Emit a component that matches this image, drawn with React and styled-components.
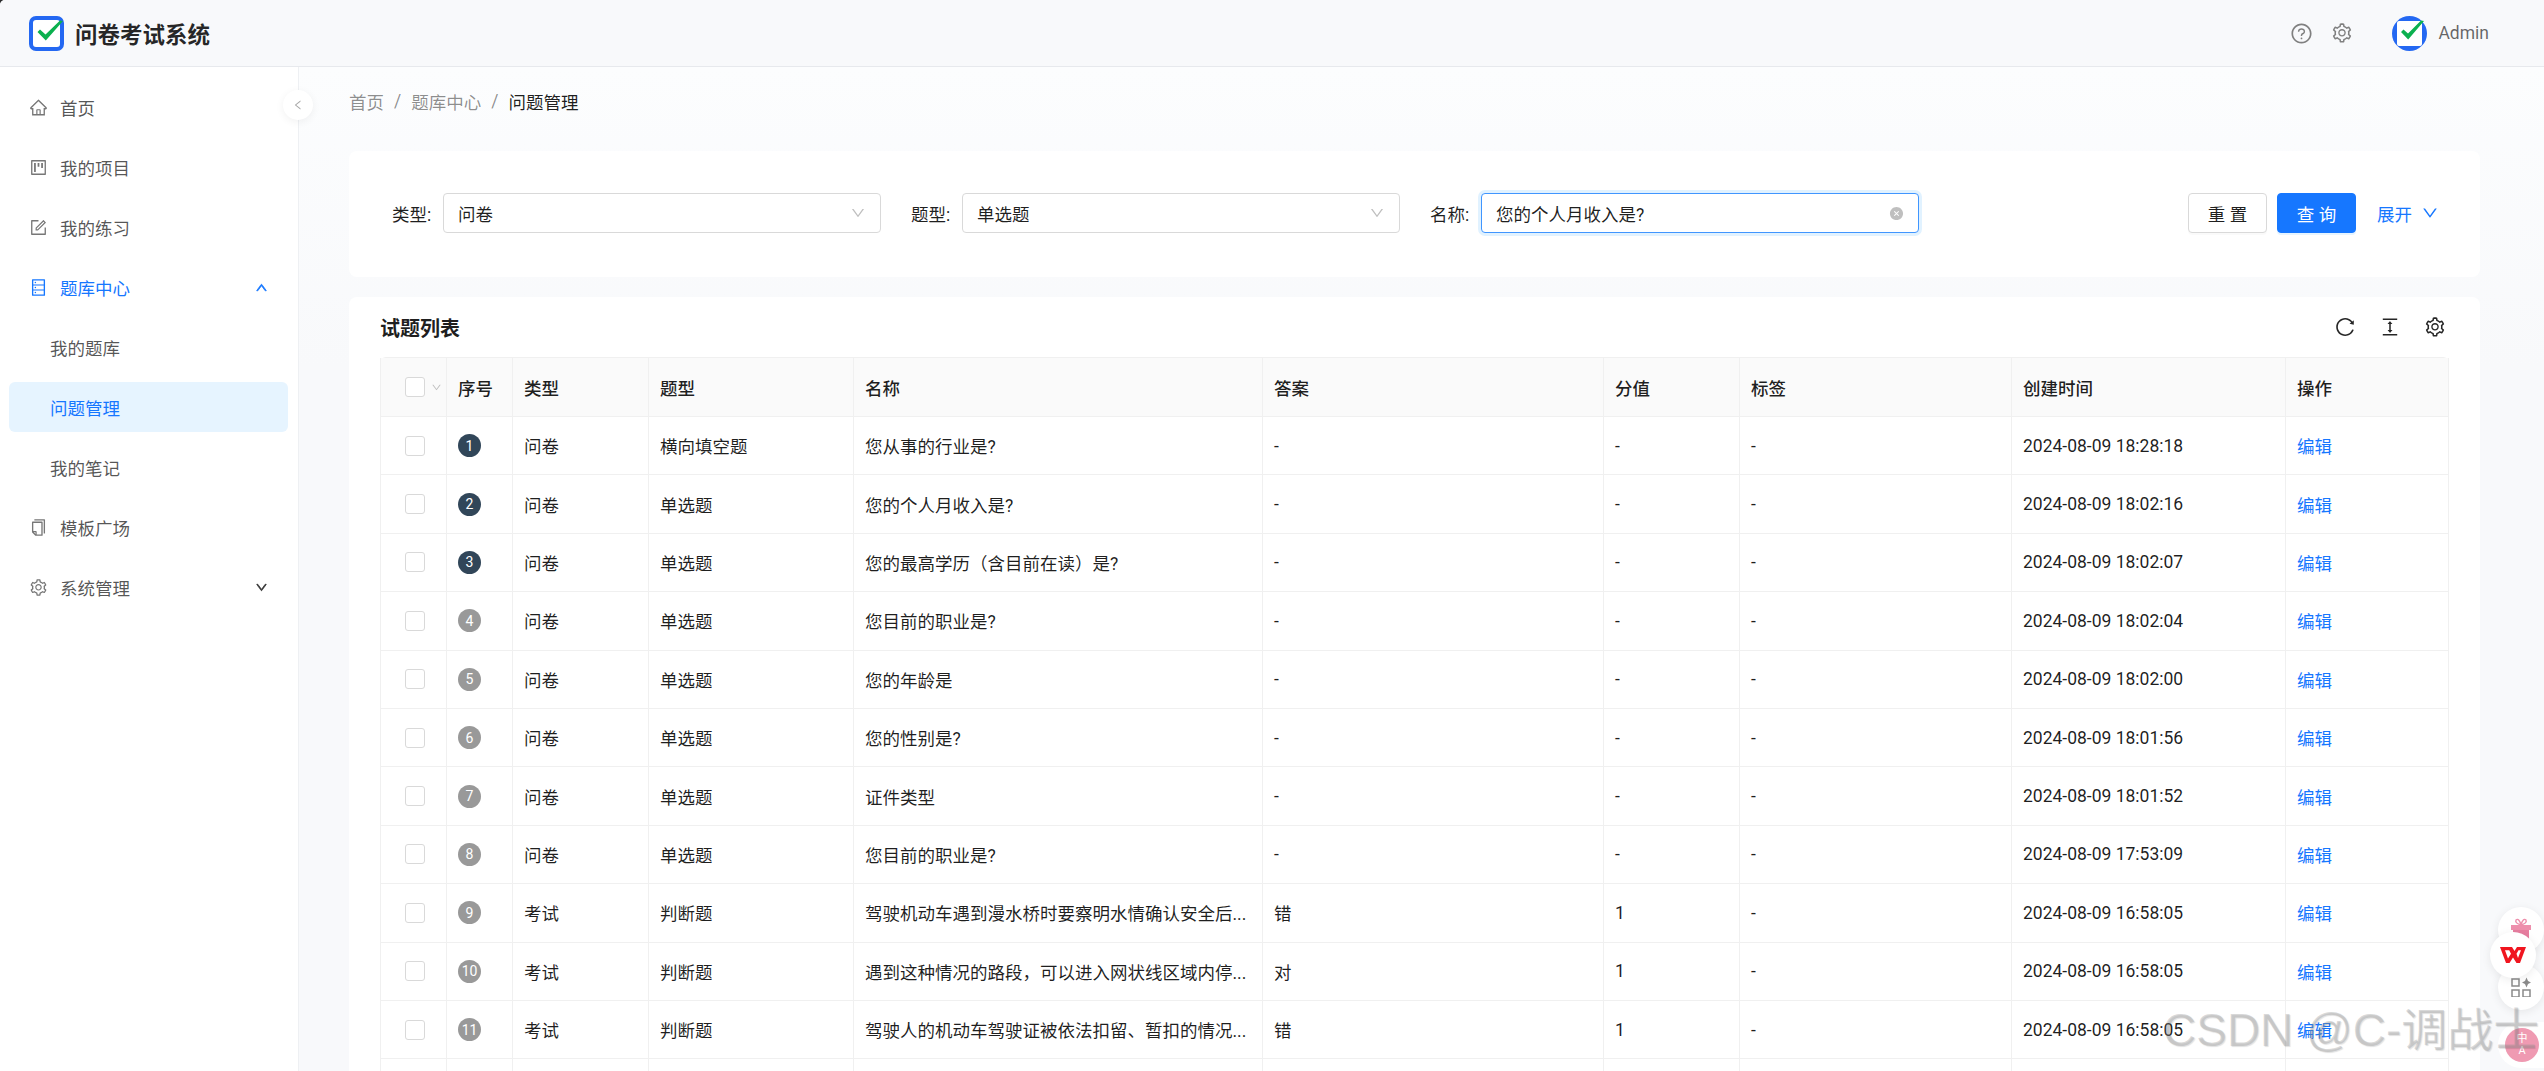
import React from "react"
import styled, { createGlobalStyle } from "styled-components"
import {
  AiOutlineHome,
  AiOutlineProject,
  AiOutlineForm,
  AiOutlineDatabase,
  AiOutlineCopy,
  AiOutlineSetting,
  AiOutlineUp,
  AiOutlineDown,
  AiOutlineLeft,
  AiOutlineQuestionCircle,
  AiOutlineReload,
  AiOutlineColumnHeight,
  AiFillCloseCircle,
} from "react-icons/ai"

const GlobalStyle = createGlobalStyle`
  html, body {
    margin: 0;
    height: 100%;
    overflow: hidden;
    background: #2b2b2b;
  }
  * {
    box-sizing: border-box;
  }
  body {
    font-family: Roboto, "Noto Sans CJK SC", sans-serif;
    font-size: 17.5px;
    color: rgba(0, 0, 0, 0.88);
  }
`

const COLUMNS = "67px 66px 136px 205px 409px 341px 136px 272px 274px 163px"

const MENU = [
  { label: "首页", icon: AiOutlineHome },
  { label: "我的项目", icon: AiOutlineProject },
  { label: "我的练习", icon: AiOutlineForm },
  { label: "题库中心", icon: AiOutlineDatabase, open: true },
  { label: "我的题库", sub: true },
  { label: "问题管理", sub: true, active: true },
  { label: "我的笔记", sub: true },
  { label: "模板广场", icon: AiOutlineCopy },
  { label: "系统管理", icon: AiOutlineSetting, closed: true },
]

const ROWS = [
  ["问卷", "横向填空题", "您从事的行业是?", "-", "-", "2024-08-09 18:28:18"],
  ["问卷", "单选题", "您的个人月收入是?", "-", "-", "2024-08-09 18:02:16"],
  ["问卷", "单选题", "您的最高学历（含目前在读）是?", "-", "-", "2024-08-09 18:02:07"],
  ["问卷", "单选题", "您目前的职业是?", "-", "-", "2024-08-09 18:02:04"],
  ["问卷", "单选题", "您的年龄是", "-", "-", "2024-08-09 18:02:00"],
  ["问卷", "单选题", "您的性别是?", "-", "-", "2024-08-09 18:01:56"],
  ["问卷", "单选题", "证件类型", "-", "-", "2024-08-09 18:01:52"],
  ["问卷", "单选题", "您目前的职业是?", "-", "-", "2024-08-09 17:53:09"],
  ["考试", "判断题", "驾驶机动车遇到漫水桥时要察明水情确认安全后...", "错", "1", "2024-08-09 16:58:05"],
  ["考试", "判断题", "遇到这种情况的路段，可以进入网状线区域内停...", "对", "1", "2024-08-09 16:58:05"],
  ["考试", "判断题", "驾驶人的机动车驾驶证被依法扣留、暂扣的情况...", "错", "1", "2024-08-09 16:58:05"],
]

const HEADERS = ["序号", "类型", "题型", "名称", "答案", "分值", "标签", "创建时间", "操作"]

const Logo = ({ size = 35 }) => (
  <svg width={size} height={size} viewBox="0 0 35 35">
    <rect x="2" y="2" width="31" height="31" rx="5" fill="#fff" stroke="#2468f2" strokeWidth="4" />
    <path d="M8.5 16 L11 13.6 L16.5 18.6 L31 4.5 L34 5 L16.8 24.5 Z" fill="#0bb04f" />
  </svg>
)

const AvatarLogo = () => (
  <svg width="35" height="35" viewBox="0 0 35 35">
    <circle cx="17.5" cy="17.5" r="17.5" fill="#2468f2" />
    <rect x="5" y="5" width="25" height="25" rx="2" fill="#fff" />
    <path d="M9 16 L11.5 13.6 L16 17.6 L29 4.5 L32 5 L16.2 23.5 Z" fill="#0bb04f" />
  </svg>
)

const Select = ({ value }) => (
  <SelectBox>
    <span>{value}</span>
    <AiOutlineDown size={16} color="#bfbfbf" />
  </SelectBox>
)

export default function App() {
  return (
    <Page>
      <GlobalStyle />
      <Header>
        <Brand>
          <Logo />
          <BrandName>问卷考试系统</BrandName>
        </Brand>
        <HeaderTools>
          <AiOutlineQuestionCircle size={23} />
          <AiOutlineSetting size={22} />
          <User>
            <AvatarLogo />
            <UserName>Admin</UserName>
          </User>
        </HeaderTools>
      </Header>
      <Body>
        <Sidebar>
          <CollapseButton>
            <AiOutlineLeft size={12} />
          </CollapseButton>
          {MENU.map(item => (
            <MenuItem key={item.label} $sub={item.sub} $active={item.active} $open={item.open}>
              {item.icon && <item.icon size={19} />}
              <span>{item.label}</span>
              {item.open && <MenuArrow><AiOutlineUp size={13} strokeWidth={60} /></MenuArrow>}
              {item.closed && <MenuArrow><AiOutlineDown size={13} strokeWidth={60} /></MenuArrow>}
            </MenuItem>
          ))}
        </Sidebar>
        <Main>
          <Breadcrumb>
            <Crumb>首页</Crumb>
            <Slash>/</Slash>
            <Crumb>题库中心</Crumb>
            <Slash>/</Slash>
            <Crumb $current>问题管理</Crumb>
          </Breadcrumb>
          <SearchCard>
            <Field>
              <FieldLabel>类型:</FieldLabel>
              <Select value="问卷" />
            </Field>
            <Field>
              <FieldLabel>题型:</FieldLabel>
              <Select value="单选题" />
            </Field>
            <Field>
              <FieldLabel>名称:</FieldLabel>
              <InputBox>
                <span>您的个人月收入是?</span>
                <AiFillCloseCircle size={15} color="#bfbfbf" />
              </InputBox>
            </Field>
            <SearchActions>
              <Button>重 置</Button>
              <Button $primary>查 询</Button>
              <ExpandLink>
                展开
                <AiOutlineDown size={18} />
              </ExpandLink>
            </SearchActions>
          </SearchCard>
          <TableCard>
            <TableTop>
              <TableTitle>试题列表</TableTitle>
              <TableTools>
                <AiOutlineReload size={22} />
                <AiOutlineColumnHeight size={22} />
                <AiOutlineSetting size={22} />
              </TableTools>
            </TableTop>
            <Table>
              <HeadRow>
                <CheckCell>
                  <Checkbox />
                  <HeadCaret>
                    <AiOutlineDown size={11} />
                  </HeadCaret>
                </CheckCell>
                {HEADERS.map(title => (
                  <Cell key={title}>{title}</Cell>
                ))}
              </HeadRow>
              {ROWS.map((row, i) => (
                <DataRow key={i}>
                  <CheckCell>
                    <Checkbox />
                  </CheckCell>
                  <Cell>
                    <IndexBadge $top={i < 3}>{i + 1}</IndexBadge>
                  </Cell>
                  <Cell>{row[0]}</Cell>
                  <Cell>{row[1]}</Cell>
                  <Cell>{row[2]}</Cell>
                  <Cell>{row[3]}</Cell>
                  <Cell>{row[4]}</Cell>
                  <Cell>-</Cell>
                  <Cell>{row[5]}</Cell>
                  <Cell>
                    <EditLink>编辑</EditLink>
                  </Cell>
                </DataRow>
              ))}
              <DataRow>
                <CheckCell />
                {HEADERS.map(title => (
                  <Cell key={title} />
                ))}
              </DataRow>
            </Table>
          </TableCard>
        </Main>
      </Body>

      <FloatButton $top={907} $right={0}>
        <svg width="22" height="24" viewBox="0 0 22 24">
          <path d="M1 7h20v5H1z" fill="#ee8fac" />
          <path d="M3 12h16v12H3z" fill="#e77ea0" />
          <path d="M11 7C7 6 5 4 6 2c2-2 4 1 5 5 1-4 3-7 5-5 1 2-1 4-5 5z" fill="none" stroke="#ee8fac" strokeWidth="1.4" />
        </svg>
      </FloatButton>
      <FloatButton $top={964} $right={0}>
        <svg width="20" height="20" viewBox="0 0 20 20" fill="none" stroke="#8a8a8a" strokeWidth="1.5">
          <rect x="1" y="2" width="7" height="7" />
          <rect x="1" y="13" width="7" height="7" />
          <rect x="12" y="13" width="7" height="7" />
          <path d="M15.5 0.5 L17 4 L20 5.5 L17 7 L15.5 10.5 L14 7 L11 5.5 L14 4 Z" fill="#8a8a8a" stroke="none" />
        </svg>
      </FloatButton>
      <FloatButton $top={932} $right={8}>
        <svg width="26" height="18" viewBox="0 0 26 18">
          <path d="M0 1 H12 L14.5 5 L17 1 H26 L20 17 H16.5 L13 11.5 L9.5 17 H6 Z M5 4.2 L8 12.5 L11 7.8 L9.2 4.2 Z M18.5 4.2 L16.5 7.8 L18 12 L21 4.2 Z" fill="#f0151f" fillRule="evenodd" />
        </svg>
      </FloatButton>
      <TranslateTab>
        <TranslateDot>
          <span>中</span>
          <span>A</span>
        </TranslateDot>
      </TranslateTab>
      <Watermark>CSDN @C-调战士</Watermark>
    </Page>
  )
}

const Page = styled.div`
  position: relative;
  width: 100vw;
  height: 100vh;
  overflow: hidden;
  display: flex;
  flex-direction: column;
  background: #f8f9fb;
  border-top-left-radius: 5px;
`

const Header = styled.header`
  flex: none;
  height: 67px;
  display: flex;
  align-items: center;
  justify-content: space-between;
  padding: 0 55px 0 29px;
  background: #f8f9fb;
  border-bottom: 1px solid #e7e9ed;
`

const Brand = styled.div`
  display: flex;
  align-items: center;
  gap: 11px;
`

const BrandName = styled.span`
  font-size: 22.5px;
  font-weight: 600;
  color: rgba(0, 0, 0, 0.85);
`

const HeaderTools = styled.div`
  display: flex;
  align-items: center;
  gap: 18px;
  color: #808080;
`

const User = styled.div`
  display: flex;
  align-items: center;
  gap: 11px;
  margin-left: 21px;
`

const UserName = styled.span`
  font-size: 17.5px;
  color: rgba(0, 0, 0, 0.6);
`

const Body = styled.div`
  flex: 1;
  min-height: 0;
  display: flex;
`

const Sidebar = styled.aside`
  position: relative;
  z-index: 1;
  flex: none;
  width: 299px;
  padding: 15px 10px 0 9px;
  background: #fff;
  border-right: 1px solid #eef0f3;
`

const CollapseButton = styled.div`
  position: absolute;
  top: 23px;
  right: -15px;
  width: 30px;
  height: 30px;
  display: flex;
  align-items: center;
  justify-content: center;
  border-radius: 50%;
  background: #fff;
  color: #a6a6a6;
  box-shadow: 0 2px 8px rgba(0, 0, 0, 0.06);
`

const MenuItem = styled.div`
  display: flex;
  align-items: center;
  height: 50px;
  margin-bottom: 10px;
  padding-left: ${p => (p.$sub ? "41px" : "20px")};
  gap: 12px;
  border-radius: 6px;
  background: ${p => (p.$active ? "#e6f4ff" : "transparent")};
  color: ${p => (p.$active || p.$open ? "#1677ff" : "rgba(0, 0, 0, 0.68)")};

  > svg {
    color: ${p => (p.$open ? "#1677ff" : "#777")};
  }
`

const MenuArrow = styled.span`
  display: flex;
  margin-left: auto;
  margin-right: 20px;
`

const Main = styled.main`
  flex: 1;
  min-width: 0;
  padding: 20px 64px 0 50px;
  background: linear-gradient(#fcfdfe, #f8f9fb 300px);
`

const Breadcrumb = styled.nav`
  display: flex;
  align-items: center;
  height: 28px;
  margin-bottom: 36px;
`

const Crumb = styled.span`
  color: ${p => (p.$current ? "rgba(0, 0, 0, 0.88)" : "rgba(0, 0, 0, 0.45)")};
`

const Slash = styled.span`
  margin: 0 10px;
  color: rgba(0, 0, 0, 0.45);
`

const SearchCard = styled.section`
  height: 126px;
  display: flex;
  align-items: center;
  gap: 30px;
  padding: 0 41px 2px 43px;
  margin-bottom: 20px;
  background: #fff;
  border-radius: 8px;
`

const Field = styled.div`
  flex: none;
  width: 489px;
  display: flex;
  align-items: center;
`

const FieldLabel = styled.label`
  flex: none;
  width: 51px;
`

const SelectBox = styled.div`
  flex: 1;
  height: 40px;
  display: flex;
  align-items: center;
  justify-content: space-between;
  padding: 0 14px;
  background: #fff;
  border: 1px solid #d9d9d9;
  border-radius: 4px;
`

const InputBox = styled(SelectBox)`
  border-color: #4096ff;
  box-shadow: 0 0 0 3px rgba(5, 145, 255, 0.12);
`

const SearchActions = styled.div`
  display: flex;
  align-items: center;
  gap: 10px;
  margin-left: auto;
`

const Button = styled.button`
  width: 79px;
  height: 40px;
  padding: 0;
  font: inherit;
  border-radius: 4px;
  border: 1px solid ${p => (p.$primary ? "#1677ff" : "#d9d9d9")};
  background: ${p => (p.$primary ? "#1677ff" : "#fff")};
  color: ${p => (p.$primary ? "#fff" : "rgba(0, 0, 0, 0.88)")};
  box-shadow: 0 2px 0 ${p => (p.$primary ? "rgba(5, 145, 255, 0.1)" : "rgba(0, 0, 0, 0.02)")};
`

const ExpandLink = styled.a`
  display: flex;
  align-items: center;
  gap: 9px;
  margin-left: 11px;
  color: #1677ff;
`

const TableCard = styled.section`
  height: 900px;
  padding: 0 31px;
  background: #fff;
  border-radius: 8px;
`

const TableTop = styled.div`
  height: 60px;
  display: flex;
  align-items: center;
  justify-content: space-between;
`

const TableTitle = styled.h2`
  margin: 0;
  font-size: 20px;
  font-weight: 600;
`

const TableTools = styled.div`
  display: flex;
  align-items: center;
  gap: 23px;
  margin-right: 3px;
  color: rgba(0, 0, 0, 0.85);
`

const Table = styled.div`
  border-top: 1px solid #f0f0f0;
  border-top-left-radius: 6px;
  border-top-right-radius: 6px;
`

const HeadRow = styled.div`
  display: grid;
  grid-template-columns: ${COLUMNS};
  height: 59px;
  background: #fafafa;
  font-weight: 500;
  border-bottom: 1px solid #f0f0f0;
`

const DataRow = styled(HeadRow)`
  height: 58.4px;
  background: #fff;
  font-weight: 400;
`

const Cell = styled.div`
  display: flex;
  align-items: center;
  min-width: 0;
  padding: 0 12px 0 11px;
  white-space: nowrap;
  border-right: 1px solid #f0f0f0;
`

const CheckCell = styled(Cell)`
  position: relative;
  padding: 0 0 0 24px;
  border-left: 1px solid #f0f0f0;
`

const Checkbox = styled.span`
  width: 20px;
  height: 20px;
  background: #fff;
  border: 1px solid #d9d9d9;
  border-radius: 3px;
`

const HeadCaret = styled.span`
  display: flex;
  margin-left: 6px;
  color: #bfbfbf;
`

const IndexBadge = styled.span`
  width: 23px;
  height: 23px;
  display: flex;
  align-items: center;
  justify-content: center;
  border-radius: 50%;
  font-size: 14px;
  color: #fff;
  background: ${p => (p.$top ? "#314659" : "#999")};
`

const EditLink = styled.a`
  color: #1677ff;
`

const FloatButton = styled.div`
  position: absolute;
  top: ${p => p.$top}px;
  right: ${p => p.$right}px;
  width: 46px;
  height: 46px;
  display: flex;
  align-items: center;
  justify-content: center;
  border-radius: 50%;
  background: #fff;
  box-shadow: 0 2px 10px rgba(0, 0, 0, 0.08);
`

const TranslateTab = styled.div`
  position: absolute;
  top: 1022px;
  right: 0;
  width: 46px;
  height: 46px;
  display: flex;
  align-items: center;
  justify-content: flex-end;
  padding-right: 5px;
  background: #fff;
  border-radius: 23px 0 0 23px;
`

const TranslateDot = styled.div`
  width: 34px;
  height: 34px;
  display: flex;
  flex-direction: column;
  align-items: center;
  justify-content: center;
  border-radius: 50%;
  background: #ef9ab2;
  color: #fff;
  font-size: 11px;
  line-height: 12px;
`

const Watermark = styled.div`
  position: absolute;
  top: 998px;
  left: 2163px;
  font-family: "Liberation Sans", "Noto Sans CJK SC", sans-serif;
  font-size: 46px;
  line-height: 64px;
  white-space: nowrap;
  color: rgba(150, 150, 150, 0.35);
  text-shadow: 1px 1px 1px rgba(0, 0, 0, 0.12);
  pointer-events: none;
`
